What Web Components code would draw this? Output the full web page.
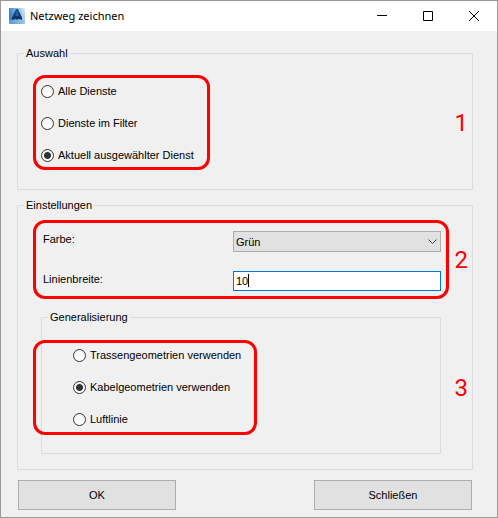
<!DOCTYPE html>
<html lang="de">
<head>
    <meta charset="UTF-8">
    <meta name="viewport" content="width=device-width, initial-scale=1.0">
    <title>Netzweg zeichnen</title>
    <style>
        body {
            margin: 0;
            font: 11px/16px "Liberation Sans", Arial, sans-serif;
            color: #000;
        }
    </style>
</head>
<body>

    <app-window caption="Netzweg zeichnen">
        <group-box label="Auswahl">
            <mark-frame number="1" style="--top: -8px; --right: 231px; --bottom: -7px; --left: -8px">
                <radio-list options="Alle Dienste|Dienste im Filter|Aktuell ausgewählter Dienst" selected="2"></radio-list>
            </mark-frame>
        </group-box>
        <group-box label="Einstellungen" style="--pad-top: 18px; --pad-bottom: 15px">
            <mark-frame number="2" style="--top: -11px; --right: -8px; --bottom: -8px; --left: -8px">
                <line-settings></line-settings>
            </mark-frame>
            <mark-frame number="3" style="--top: 30px; --right: 184px; --bottom: 19px; --left: -8px">
                <group-box label="Generalisierung" style="--pad-left: 31px">
                    <radio-list options="Trassengeometrien verwenden|Kabelgeometrien verwenden|Luftlinie" selected="1"></radio-list>
                </group-box>
            </mark-frame>
        </group-box>
        <push-button slot="actions">OK</push-button>
        <push-button slot="actions">Schließen</push-button>
    </app-window>

<script>

    class AppWindow extends HTMLElement {

        constructor(){
            super()
            this.attachShadow({mode:"open"})
            this.shadowRoot.innerHTML = `
            <style>
                :host {
                    display: block;
                    border: 1px solid #999;
                    background: #f0f0f0;
                }
                header {
                    display: flex;
                    align-items: center;
                    height: 30px;
                    padding-left: 8px;
                    background: #fff;
                }
                h1 {
                    flex: 1;
                    margin: 0 0 0 5px;
                    font: 11px/16px "Noto Sans", "Open Sans", sans-serif;
                }
                header button {
                    display: grid;
                    place-items: center;
                    width: 46px;
                    height: 30px;
                    padding: 0;
                    border: 0;
                    background: none;
                }
                svg { display: block; }
                main {
                    display: flex;
                    flex-direction: column;
                    gap: 8px;
                    padding: 15px 24px 10px 16px;
                }
                footer {
                    display: flex;
                    justify-content: space-between;
                    padding: 0 25px 7px 17px;
                }
            </style>
            <header>
                <svg width="16" height="16" viewBox="0 0 16 16" aria-hidden="true">
                    <defs>
                        <linearGradient id="sky" x1="0" y1="0.3" x2="1" y2="0">
                            <stop offset="0" stop-color="#3583c4"/>
                            <stop offset="0.5" stop-color="#8ab8de"/>
                            <stop offset="1" stop-color="#dceaf6"/>
                        </linearGradient>
                        <linearGradient id="ink" x1="0" y1="0" x2="0" y2="1">
                            <stop offset="0" stop-color="#1a5a9c"/>
                            <stop offset="1" stop-color="#0c2d5c"/>
                        </linearGradient>
                    </defs>
                    <path fill="url(#sky)" d="M0 0h16v16H0z"/>
                    <path fill="#8fbde2" opacity=".5" d="M0 12h16v4H0z"/>
                    <path fill="url(#ink)" d="M7 1h2l4 8.500V12l-2.500-1H9l-1 1-1-1H5.500L3 12V9.500z"/>
                    <path fill="#2467a8" d="M7.500 4h1l1 4h-3z"/>
                </svg>
                <h1></h1>
                <button type="button" aria-label="Minimieren">
                    <svg width="10" height="10"><path d="M0 4.500h10" stroke="#000"/></svg>
                </button>
                <button type="button" aria-label="Maximieren">
                    <svg width="10" height="10"><path d="M.5.5h9v9h-9z" fill="none" stroke="#000"/></svg>
                </button>
                <button type="button" aria-label="Fenster schließen">
                    <svg width="10" height="10"><path d="M0 0l10 10M10 0L0 10" stroke="#000"/></svg>
                </button>
            </header>
            <main><slot></slot></main>
            <footer><slot name="actions"></slot></footer>
            `
            this.shadowRoot.querySelector("h1").textContent = this.getAttribute("caption")
        }
    }

    class GroupBox extends HTMLElement {

        constructor(){
            super()
            this.attachShadow({mode:"open"})
            this.shadowRoot.innerHTML = `
            <style>
                :host { display: block; }
                fieldset {
                    min-width: 0;
                    margin: 0;
                    padding: 0;
                    border: 1px solid #dcdcdc;
                }
                legend {
                    margin-left: 6px;
                    padding: 0 2px;
                    line-height: 15px;
                }
                /* custom properties are read here and cleared for nested groups */
                div {
                    display: flex;
                    flex-direction: column;
                    gap: 19px;
                    padding: var(--pad-top, 22px) 31px var(--pad-bottom, 26px) var(--pad-left, 23px);
                }
                ::slotted(*) {
                    --pad-top: initial;
                    --pad-bottom: initial;
                }
            </style>
            <fieldset>
                <legend></legend>
                <div><slot></slot></div>
            </fieldset>
            `
            this.shadowRoot.querySelector("legend").textContent = this.getAttribute("label")
        }
    }

    // red outline with a number, drawn over whatever is slotted in
    class MarkFrame extends HTMLElement {

        constructor(){
            super()
            this.attachShadow({mode:"open"})
            this.shadowRoot.innerHTML = `
            <style>
                :host {
                    display: block;
                    position: relative;
                }
                .frame {
                    position: absolute;
                    inset: var(--top) var(--right) var(--bottom) var(--left);
                    border: 3px solid #f00;
                    border-radius: 12px;
                    pointer-events: none;
                }
                .number {
                    position: absolute;
                    inset: var(--top) -27px var(--bottom) auto;
                    display: flex;
                    align-items: center;
                    font-family: Roboto, sans-serif;
                    font-size: 24px;
                    color: #f00;
                }
            </style>
            <slot></slot>
            <div class="frame"></div>
            <span class="number"></span>
            `
            this.shadowRoot.querySelector(".number").textContent = this.getAttribute("number")
        }
    }

    class RadioList extends HTMLElement {

        constructor(){
            super()
            this.attachShadow({mode:"open"})
            const selected = parseInt(this.getAttribute("selected"))
            const rows = this.getAttribute("options").split("|").map((text, i) => `
                <label><input type="radio" name="choice" ${i === selected ? "checked" : ""}>${text}</label>
            `).join("")

            this.shadowRoot.innerHTML = `
            <style>
                :host {
                    display: flex;
                    flex-direction: column;
                    align-items: flex-start;
                    gap: 16px;
                }
                label {
                    display: flex;
                    align-items: center;
                    gap: 4px;
                }
                input {
                    appearance: none;
                    box-sizing: border-box;
                    width: 13px;
                    height: 13px;
                    margin: 0;
                    border: 1px solid #333;
                    border-radius: 50%;
                    background: #fff;
                }
                input:checked {
                    background: radial-gradient(circle, #333 3px, #fff 4px);
                }
            </style>
            ${rows}
            `
        }
    }

    class LineSettings extends HTMLElement {

        constructor(){
            super()
            this.attachShadow({mode:"open"})
            this.shadowRoot.innerHTML = `
            <style>
                :host {
                    display: grid;
                    grid-template-columns: 192px 1fr;
                    row-gap: 19px;
                }
                label { padding-left: 2px; }
                select, input {
                    appearance: none;
                    box-sizing: border-box;
                    width: 100%;
                    margin: 0;
                    padding: 0 2px;
                    border-radius: 0;
                    font: inherit;
                    color: inherit;
                    outline: 0;
                }
                select {
                    height: 21px;
                    border: 1px solid #adadad;
                    background: #e1e1e1;
                }
                input {
                    height: 20px;
                    border: 1px solid #0078d7;
                    background: #fff;
                }
                .field {
                    position: relative;
                    display: flex;
                }
                .field svg {
                    position: absolute;
                    right: 4px;
                    top: 8px;
                    pointer-events: none;
                }
                .caret {
                    position: absolute;
                    left: 15px;
                    top: 3px;
                    width: 1px;
                    height: 13px;
                    background: #000;
                }
            </style>
            <label for="color">Farbe:</label>
            <div class="field">
                <select id="color"><option>Grün</option><option>Rot</option><option>Blau</option></select>
                <svg width="9" height="6"><path d="M.5.5l4 4 4-4" fill="none" stroke="#444"/></svg>
            </div>
            <label for="width">Linienbreite:</label>
            <div class="field">
                <input id="width" type="text" value="10">
                <span class="caret"></span>
            </div>
            `
        }
    }

    class PushButton extends HTMLElement {

        constructor(){
            super()
            this.attachShadow({mode:"open"})
            this.shadowRoot.innerHTML = `
            <style>
                :host {
                    display: block;
                    width: 158px;
                }
                button {
                    width: 100%;
                    height: 30px;
                    padding: 0;
                    border: 1px solid #adadad;
                    background: #e1e1e1;
                    font: inherit;
                    color: inherit;
                    display: block;
                }
            </style>
            <button type="button"><slot></slot></button>
            `
        }
    }

    customElements.define("app-window", AppWindow)
    customElements.define("group-box", GroupBox)
    customElements.define("mark-frame", MarkFrame)
    customElements.define("radio-list", RadioList)
    customElements.define("line-settings", LineSettings)
    customElements.define("push-button", PushButton)

</script>
</body>
</html>
